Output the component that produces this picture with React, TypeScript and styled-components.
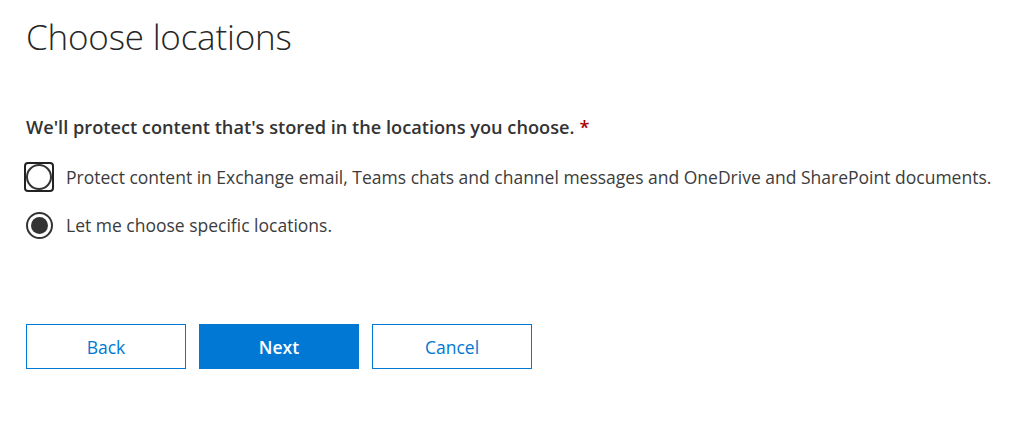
import React from "react";
import styled, { createGlobalStyle } from "styled-components";

const Global = createGlobalStyle`
  html, body { margin: 0; padding: 0; background: #fff; }
  body { font-family: "Open Sans", "Noto Sans", sans-serif; color: #333; }
`;

const Page = styled.div`
  padding: 13px 0 0 26px;
  width: 1024px;
  height: 428px;
  box-sizing: border-box;
  overflow: hidden;
`;

const Title = styled.h1`
  margin: 0;
  font-weight: 300;
  font-size: 35px;
  line-height: 48px;
  color: #262626;
  letter-spacing: -0.2px;
`;

const Label = styled.div`
  margin-top: 53px;
  font-size: 18.2px;
  font-weight: 600;
  color: #333;
  line-height: 26px;
`;

const Req = styled.span`
  color: #a80000;
  margin-left: 5px;
`;

const Options = styled.div`
  display: flex;
  flex-direction: column;
  gap: 14px;
  margin-top: 20px;
  margin-left: -2px;
`;

const Option = styled.label`
  display: flex;
  align-items: center;
  gap: 12px;
  font-size: 17.5px;
  color: #3c3c3c;
  line-height: 34px;
`;

const RadioWrap = styled.span<{ $focused?: boolean }>`
  width: 30px;
  height: 30px;
  box-sizing: border-box;
  display: flex;
  align-items: center;
  justify-content: center;
  border: 2px solid ${(p) => (p.$focused ? "#222" : "transparent")};
  border-radius: 4px;
  flex-shrink: 0;
`;

const Circle = styled.span<{ $checked?: boolean }>`
  width: ${(p) => (p.$checked ? 27 : 26)}px;
  height: ${(p) => (p.$checked ? 27 : 26)}px;
  box-sizing: border-box;
  border-radius: 50%;
  border: 2px solid #333;
  display: flex;
  align-items: center;
  justify-content: center;
  flex-shrink: 0;
  &::after {
    content: "";
    width: 17px;
    height: 17px;
    border-radius: 50%;
    background: #333;
    display: ${(p) => (p.$checked ? "block" : "none")};
  }
`;

const Buttons = styled.div`
  display: flex;
  gap: 13px;
  margin-top: 82px;
`;

const Button = styled.button<{ $primary?: boolean }>`
  width: 160px;
  height: 45px;
  box-sizing: border-box;
  border: 1px solid #0078d4;
  background: ${(p) => (p.$primary ? "#0078d4" : "#fff")};
  color: ${(p) => (p.$primary ? "#fff" : "#0078d4")};
  font-family: "Open Sans", "Noto Sans", sans-serif;
  font-size: 17.5px;
  font-weight: ${(p) => (p.$primary ? 600 : 400)};
  cursor: pointer;
  padding: 0;
`;

export default function App() {
  return (
    <Page>
      <Global />
      <Title>Choose locations</Title>
      <Label>
        We'll protect content that's stored in the locations you choose.<Req>*</Req>
      </Label>
      <Options>
        <Option>
          <RadioWrap $focused>
            <Circle />
          </RadioWrap>
          Protect content in Exchange email, Teams chats and channel messages and OneDrive and SharePoint documents.
        </Option>
        <Option>
          <RadioWrap>
            <Circle $checked />
          </RadioWrap>
          Let me choose specific locations.
        </Option>
      </Options>
      <Buttons>
        <Button>Back</Button>
        <Button $primary>Next</Button>
        <Button>Cancel</Button>
      </Buttons>
    </Page>
  );
}
